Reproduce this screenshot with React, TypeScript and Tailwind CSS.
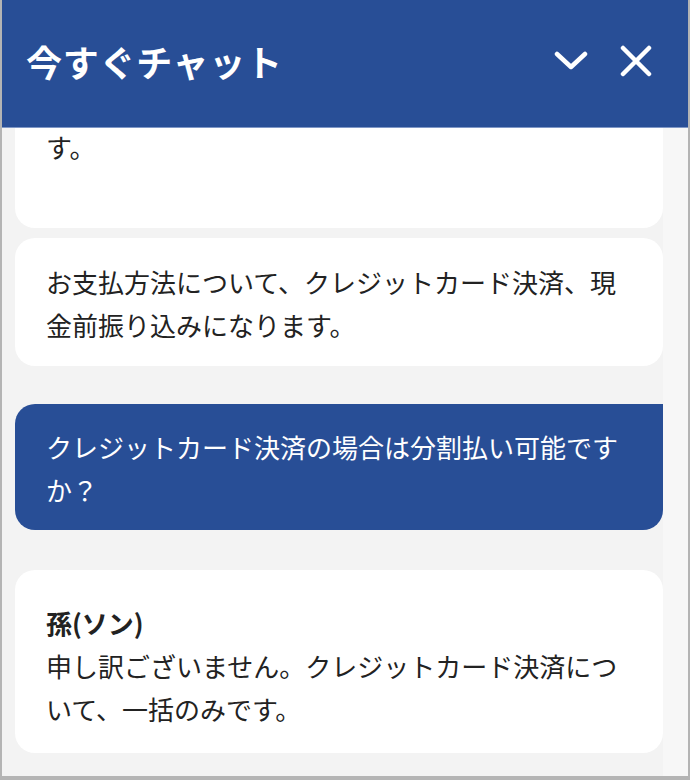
const jp = { fontFamily: '"Noto Sans CJK JP", "Noto Sans", sans-serif' };

function Header() {
  return (
    <div className="flex h-[128px] shrink-0 items-center justify-between border-b border-[#7f97c6] bg-[#284e96] pb-[6px] pl-[24px] pr-[36px]">
      <h1 className="text-[36px] font-bold leading-none tracking-[0.02em] text-white">今すぐチャット</h1>
      <div className="flex items-center gap-[32px]">
        <svg width="34" height="22" viewBox="0 0 34 22" fill="none">
          <path d="M3 4 L17 17 L31 4" stroke="white" strokeWidth="4.5" strokeLinecap="round" strokeLinejoin="round" />
        </svg>
        <svg width="32" height="32" viewBox="0 0 32 32" fill="none">
          <path d="M3 3 L29 29 M29 3 L3 29" stroke="white" strokeWidth="4.5" strokeLinecap="round" />
        </svg>
      </div>
    </div>
  );
}

function BotCard({ name, children, className }: { name?: string; children: React.ReactNode; className: string }) {
  return (
    <div className={`bg-white pl-[31px] pr-[20px] text-[26px] leading-[43px] text-[#222] ${className}`}>
      {name && <div className="font-bold">{name}</div>}
      {children}
    </div>
  );
}

export default function App() {
  return (
    <div className="flex h-[780px] w-[690px] flex-col overflow-hidden border-x-2 border-b-4 border-[#b4b4b4] bg-[#f3f3f3]" style={jp}>
      <Header />
      <div className="flex flex-1 overflow-hidden">
        <div className="flex flex-1 flex-col pl-[13px]">
          <BotCard className="-mt-[3px] rounded-b-[20px] pb-[60px]">す。</BotCard>
          <BotCard className="mt-[10px] rounded-[20px] pt-[22px] pb-[20px]">
            お支払方法について、クレジットカード決済、現
            <br />
            金前振り込みになります。
          </BotCard>
          <div className="mt-[38px] rounded-[20px] rounded-tr-none bg-[#284e96] pl-[31px] pr-[20px] pt-[21px] pb-[19px] text-[26px] leading-[43px] text-white">
            クレジットカード決済の場合は分割払い可能です
            <br />
            か？
          </div>
          <BotCard name="孫(ソン)" className="mt-[40px] rounded-[20px] pt-[31px] pb-[23px]">
            申し訳ございません。クレジットカード決済につ
            <br />
            いて、一括のみです。
          </BotCard>
        </div>
        <div className="w-[25px] shrink-0 bg-[#f7f7f7]" />
      </div>
    </div>
  );
}
